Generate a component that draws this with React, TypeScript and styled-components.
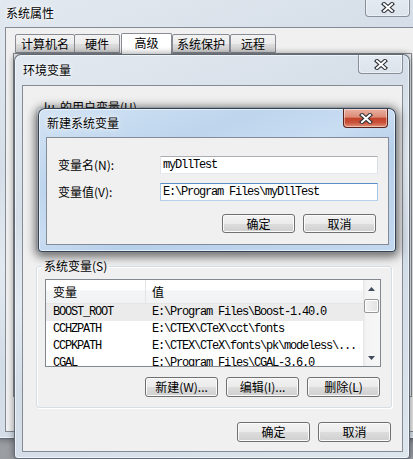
import React from "react";
import styled, { createGlobalStyle } from "styled-components";

const CJK = `"Noto Sans CJK SC", "Noto Sans", sans-serif`;
const MONO = `"Liberation Mono", "DejaVu Sans Mono", monospace`;

const GlobalStyle = createGlobalStyle`
  html, body { margin: 0; padding: 0; }
  body {
    width: 413px; height: 459px; overflow: hidden;
    background: #a4a8ac;
    font-family: ${CJK};
    font-size: 12px;
    color: #000;
  }
  * { box-sizing: border-box; }
`;

const Desktop = styled.div`
  position: relative;
  width: 413px;
  height: 459px;
  overflow: hidden;
  background: linear-gradient(#b6babe, #9a9ea3);
`;

const activeGlass = `linear-gradient(160deg, #d3e3f4 0%, #bdd5ed 30%, #c9ddf2 48%, #b7d0ea 62%, #c2d8ef 100%)`;
const inactiveGlass = `linear-gradient(160deg, #e3e9f0 0%, #d5dee8 30%, #e3e9f0 46%, #d2dce7 62%, #dde5ed 100%)`;

const Frame = styled.div<{ $x: number; $y: number; $w: number; $h: number; $active?: boolean; $z: number }>`
  position: absolute;
  left: ${(p) => p.$x}px;
  top: ${(p) => p.$y}px;
  width: ${(p) => p.$w}px;
  height: ${(p) => p.$h}px;
  z-index: ${(p) => p.$z};
  display: flex;
  flex-direction: column;
  padding: 0 6px 6px 7px;
  border: 1px solid ${(p) => (p.$active ? "rgba(25,40,60,0.85)" : "rgba(55,65,80,0.75)")};
  border-radius: 7px 7px 4px 4px;
  background: ${(p) => (p.$active ? activeGlass : inactiveGlass)};
  box-shadow: inset 0 0 0 1px rgba(255, 255, 255, 0.6),
    ${(p) => (p.$active ? "0 2px 10px 3px rgba(0,0,0,0.55)" : "0 0 6px 1px rgba(0,0,0,0.35)")};
`;

const TitleBar = styled.div<{ $h: number }>`
  height: ${(p) => p.$h}px;
  flex-shrink: 0;
  display: flex;
  align-items: center;
  justify-content: space-between;
`;

const Title = styled.span`
  padding-left: 1px;
  font-family: ${CJK};
  font-size: 12px;
  line-height: 14px;
  color: #000;
  text-shadow: 0 0 6px rgba(255, 255, 255, 0.95), 0 0 3px rgba(255, 255, 255, 0.9);
`;

const CloseButton = styled.div<{ $active?: boolean; $mr: number }>`
  align-self: flex-start;
  width: 45px;
  height: 19px;
  margin-right: ${(p) => p.$mr}px;
  display: flex;
  align-items: center;
  justify-content: center;
  border: 1px solid ${(p) => (p.$active ? "#5a2218" : "rgba(60,70,85,0.55)")};
  border-top: none;
  border-radius: 0 0 4px 4px;
  background: ${(p) =>
    p.$active
      ? "linear-gradient(#eab2a4 0%, #dc8a74 45%, #c4432b 52%, #c9513a 75%, #e0927a 100%)"
      : "linear-gradient(rgba(255,255,255,0.35), rgba(255,255,255,0.15))"};
  box-shadow: inset 0 0 0 1px rgba(255, 255, 255, 0.45);
`;

const CloseGlyph = () => (
  <svg width="14" height="11" viewBox="0 0 14 11">
    <path d="M3 2 L11 9 M11 2 L3 9" stroke="#2f3238" strokeWidth="4.2" strokeLinecap="square" fill="none" />
    <path d="M3 2 L11 9 M11 2 L3 9" stroke="#ffffff" strokeWidth="2" strokeLinecap="square" fill="none" />
  </svg>
);

const Client = styled.div`
  flex: 1;
  min-height: 0;
  display: flex;
  flex-direction: column;
  overflow: hidden;
  border: 1px solid rgba(60, 72, 90, 0.6);
  background: #f0f0f0;
`;

/* ---------- back window (系统属性) ---------- */
const BackBody = styled.div`
  padding: 5px 0 0 7px;
  display: flex;
  flex-direction: column;
`;

const TabRow = styled.div`
  display: flex;
  align-items: flex-end;
  height: 20px;
  padding-left: 2px;
  position: relative;
  z-index: 1;
`;

const Tab = styled.div<{ $w: number; $selected?: boolean; $gapLeft?: number }>`
  width: ${(p) => p.$w}px;
  height: ${(p) => (p.$selected ? 21 : 19)}px;
  margin-left: ${(p) => p.$gapLeft ?? 0}px;
  margin-bottom: ${(p) => (p.$selected ? -1 : 0)}px;
  border: 1px solid #898c95;
  border-bottom: ${(p) => (p.$selected ? "none" : "1px solid #898c95")};
  border-radius: 2px 2px 0 0;
  background: ${(p) =>
    p.$selected ? "#ffffff" : "linear-gradient(#f3f3f3 0%, #ebebeb 50%, #dddddd 51%, #cfcfcf 100%)"};
  font-size: 12px;
  line-height: 17px;
  text-align: center;
  color: #000;
`;

const TabPanel = styled.div`
  height: 344px;
  margin-right: 7px;
  border: 1px solid #898c95;
  background: #f7f7f7;
`;

/* ---------- env window (环境变量) ---------- */
const EnvBody = styled.div`
  flex: 1;
  display: flex;
  flex-direction: column;
  padding: 21px 10px 9px 13px;
`;

const Group = styled.div<{ $h: number; $mt?: number }>`
  height: ${(p) => p.$h}px;
  margin-top: ${(p) => p.$mt ?? 0}px;
  flex-shrink: 0;
  display: flex;
  flex-direction: column;
  padding: 0 10px 10px 8px;
  border: 1px solid #d5dfe5;
  border-radius: 3px;
  box-shadow: inset 1px 1px 0 #ffffff, 1px 1px 0 #ffffff;
`;

const GroupLabel = styled.span`
  align-self: flex-start;
  margin: -8px 0 0 -3px;
  padding: 0 2px;
  background: #f0f0f0;
  font-size: 12px;
  line-height: 14px;
  color: #000;
  white-space: pre;
`;

const ListBox = styled.div<{ $h: number }>`
  height: ${(p) => p.$h}px;
  margin-top: 6px;
  flex-shrink: 0;
  display: flex;
  border: 1px solid #828790;
  background: #ffffff;
  overflow: hidden;
`;

const ListMain = styled.div`
  flex: 1;
  min-width: 0;
  display: flex;
  flex-direction: column;
`;

const HeaderRow = styled.div`
  height: 24px;
  flex-shrink: 0;
  display: grid;
  grid-template-columns: 100px 1fr;
  border-bottom: 1px solid #e5e5e5;
  background: linear-gradient(#ffffff 0%, #ffffff 45%, #f4f5f7 46%, #f1f2f4 100%);
`;

const HeaderCell = styled.div<{ $divider?: boolean }>`
  display: flex;
  align-items: center;
  padding-left: ${(p) => (p.$divider ? 7 : 6)}px;
  border-right: ${(p) => (p.$divider ? "1px solid #e3e5e8" : "none")};
  font-size: 12px;
  color: #000;
`;

const Row = styled.div<{ $selected?: boolean }>`
  height: 17px;
  flex-shrink: 0;
  display: grid;
  grid-template-columns: 100px 1fr;
  background: ${(p) => (p.$selected ? "#ebebeb" : "transparent")};
`;

const Cell = styled.div<{ $first?: boolean }>`
  padding-left: ${(p) => (p.$first ? 7 : 6)}px;
  font-family: ${MONO};
  font-size: 12px;
  letter-spacing: -1.2px;
  line-height: 17px;
  white-space: nowrap;
  overflow: hidden;
  color: #000;
`;

const ScrollBar = styled.div`
  width: 17px;
  flex-shrink: 0;
  display: flex;
  flex-direction: column;
  background: linear-gradient(to right, #e6e6e6 0px, #f4f4f4 3px, #f6f6f6 100%);
`;

const ScrollArrow = styled.div`
  height: 17px;
  flex-shrink: 0;
  display: flex;
  align-items: center;
  justify-content: center;
`;

const ScrollTrack = styled.div`
  flex: 1;
  display: flex;
  flex-direction: column;
`;

const Thumb = styled.div`
  height: 14px;
  margin: 2px 1px 0 1px;
  border: 1px solid #979797;
  border-radius: 2px;
  background: linear-gradient(to right, #f3f3f3, #e2e2e2);
  box-shadow: inset 0 0 0 1px #ffffff;
`;

const Arrow = ({ down }: { down?: boolean }) => (
  <svg width="7" height="4" viewBox="0 0 7 4">
    <path d={down ? "M0 0 L7 0 L3.5 4 Z" : "M0 4 L7 4 L3.5 0 Z"} fill="#404a5a" />
  </svg>
);

const ButtonRow = styled.div<{ $mt: number; $mr: number }>`
  display: flex;
  justify-content: flex-end;
  gap: 8px;
  margin-top: ${(p) => p.$mt}px;
  margin-right: ${(p) => p.$mr}px;
  flex-shrink: 0;
`;

const Button = styled.button<{ $h: number }>`
  width: 73px;
  height: ${(p) => p.$h}px;
  padding: 0;
  border: 1px solid #707070;
  border-radius: 3px;
  background: linear-gradient(#f2f2f2 0%, #ebebeb 50%, #dddddd 51%, #cfcfcf 100%);
  box-shadow: inset 0 0 0 1px #fbfbfb;
  font-family: ${CJK};
  font-size: 12px;
  line-height: 14px;
  color: #000;
  white-space: pre;
`;

/* ---------- dialog (新建系统变量) ---------- */
const DialogBody = styled.div`
  flex: 1;
  display: flex;
  flex-direction: column;
  padding: 18px 10px 11px 11px;
`;

const FormGrid = styled.div`
  display: grid;
  grid-template-columns: 102px 218px;
  grid-auto-rows: 18px;
  row-gap: 9px;
  align-items: center;
`;

const FieldLabel = styled.label`
  font-size: 12px;
  line-height: 14px;
  color: #000;
`;

const TextInput = styled.input<{ $focused?: boolean }>`
  width: 218px;
  height: 18px;
  margin: 0;
  padding: 0 2px;
  border: 1px solid;
  border-color: ${(p) =>
    p.$focused ? "#5b8fc7 #a7c7e7 #b5d1ec #a7c7e7" : "#abadb3 #dbdfe6 #e3e9ef #e2e3ea"};
  outline: none;
  background: #ffffff;
  font-family: ${MONO};
  font-size: 12px;
  letter-spacing: -1.2px;
  color: #000;
`;

const rows = [
  { name: "BOOST_ROOT", value: "E:\\Program Files\\Boost-1.40.0", selected: true },
  { name: "CCHZPATH", value: "E:\\CTEX\\CTeX\\cct\\fonts" },
  { name: "CCPKPATH", value: "E:\\CTEX\\CTeX\\fonts\\pk\\modeless\\..." },
  { name: "CGAL", value: "E:\\Program Files\\CGAL-3.6.0" },
];

export default function App() {
  return (
    <>
      <GlobalStyle />
      <Desktop>
        {/* 系统属性 */}
        <Frame $x={-3} $y={-3} $w={430} $h={442} $z={1}>
          <TitleBar $h={29}>
            <Title>系统属性</Title>
            <CloseButton $mr={10}>
              <CloseGlyph />
            </CloseButton>
          </TitleBar>
          <Client>
            <BackBody>
              <TabRow>
                <Tab $w={60}>计算机名</Tab>
                <Tab $w={46} $gapLeft={-1}>硬件</Tab>
                <Tab $w={51} $gapLeft={1} $selected>
                  高级
                </Tab>
                <Tab $w={58}>系统保护</Tab>
                <Tab $w={46}>远程</Tab>
              </TabRow>
              <TabPanel />
            </BackBody>
          </Client>
        </Frame>

        {/* 环境变量 */}
        <Frame $x={14} $y={54} $w={396} $h={405} $z={2}>
          <TitleBar $h={30}>
            <Title>环境变量</Title>
            <CloseButton $mr={0}>
              <CloseGlyph />
            </CloseButton>
          </TitleBar>
          <Client>
            <EnvBody>
              <Group $h={145}>
                <GroupLabel>lu  的用户变量(U)</GroupLabel>
                <ListBox $h={88} />
              </Group>
              <Group $h={142} $mt={14}>
                <GroupLabel>系统变量(S)</GroupLabel>
                <ListBox $h={88}>
                  <ListMain>
                    <HeaderRow>
                      <HeaderCell $divider>变量</HeaderCell>
                      <HeaderCell>值</HeaderCell>
                    </HeaderRow>
                    {rows.map((r) => (
                      <Row key={r.name} $selected={r.selected}>
                        <Cell $first>{r.name}</Cell>
                        <Cell>{r.value}</Cell>
                      </Row>
                    ))}
                  </ListMain>
                  <ScrollBar>
                    <ScrollArrow>
                      <Arrow />
                    </ScrollArrow>
                    <ScrollTrack>
                      <Thumb />
                    </ScrollTrack>
                    <ScrollArrow>
                      <Arrow down />
                    </ScrollArrow>
                  </ScrollBar>
                </ListBox>
                <ButtonRow $mt={10} $mr={1}>
                  <Button $h={20}>新建(W)...</Button>
                  <Button $h={20}>编辑(I)...</Button>
                  <Button $h={20}>删除(L)</Button>
                </ButtonRow>
              </Group>
              <ButtonRow $mt={14} $mr={1}>
                <Button $h={20}>确定</Button>
                <Button $h={20}>取消</Button>
              </ButtonRow>
            </EnvBody>
          </Client>
        </Frame>

        {/* 新建系统变量 */}
        <Frame $x={38} $y={108} $w={358} $h={144} $z={3} $active>
          <TitleBar $h={28}>
            <Title>新建系统变量</Title>
            <CloseButton $mr={1} $active>
              <CloseGlyph />
            </CloseButton>
          </TitleBar>
          <Client>
            <DialogBody>
              <FormGrid>
                <FieldLabel htmlFor="varName">变量名(N):</FieldLabel>
                <TextInput id="varName" readOnly value="myDllTest" />
                <FieldLabel htmlFor="varValue">变量值(V):</FieldLabel>
                <TextInput id="varValue" readOnly value="E:\Program Files\myDllTest" $focused />
              </FormGrid>
              <ButtonRow $mt={13} $mr={2}>
                <Button $h={19}>确定</Button>
                <Button $h={19}>取消</Button>
              </ButtonRow>
            </DialogBody>
          </Client>
        </Frame>
      </Desktop>
    </>
  );
}
